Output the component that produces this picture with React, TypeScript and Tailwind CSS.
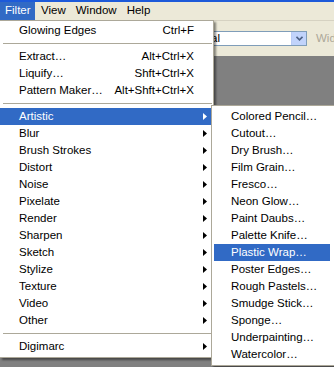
const topItems = [
  { label: "Extract…", keys: "Alt+Ctrl+X" },
  { label: "Liquify…", keys: "Shft+Ctrl+X" },
  { label: "Pattern Maker…", keys: "Alt+Shft+Ctrl+X" },
];

const groups = [
  "Artistic",
  "Blur",
  "Brush Strokes",
  "Distort",
  "Noise",
  "Pixelate",
  "Render",
  "Sharpen",
  "Sketch",
  "Stylize",
  "Texture",
  "Video",
  "Other",
];

const artistic = [
  "Colored Pencil…",
  "Cutout…",
  "Dry Brush…",
  "Film Grain…",
  "Fresco…",
  "Neon Glow…",
  "Paint Daubs…",
  "Palette Knife…",
  "Plastic Wrap…",
  "Poster Edges…",
  "Rough Pastels…",
  "Smudge Stick…",
  "Sponge…",
  "Underpainting…",
  "Watercolor…",
];

const Arrow = ({ white }: { white?: boolean }) => (
  <svg width="4" height="7" viewBox="0 0 4 7" className="shrink-0">
    <polygon points="0,0 4,3.5 0,7" fill={white ? "#ffffff" : "#000000"} />
  </svg>
);

const Separator = () => (
  <div className="h-[9px] flex items-center pl-[3px] pr-[1px]">
    <div className="h-px w-full bg-[#aca899]" />
  </div>
);

const App = () => {
  return (
    <div
      className="relative w-[334px] h-[367px] overflow-hidden bg-[#808080] text-[11.5px] text-black"
      style={{ fontFamily: '"Liberation Sans", Arial, sans-serif' }}
    >
      <div className="h-[2px] bg-[#1d5ad9]" />

      {/* menu bar */}
      <div className="h-[18px] flex items-center bg-[#ece9d8]">
        <div className="h-full w-[35px] pl-[5px] flex items-center bg-[#316ac5] text-white">
          Filter
        </div>
        <div className="flex items-center gap-[10px] ml-[6px]">
          <span>View</span>
          <span>Window</span>
          <span>Help</span>
        </div>
      </div>

      {/* options bar */}
      <div className="h-[36px] bg-[#ece9d8] border-t border-[#d6d2c2] flex items-center pl-[180px]">
        <div className="shrink-0 w-[127px] h-[15px] bg-white border border-[#7f9db9] flex items-center">
          <span className="flex-1 pl-[2px] leading-[13px]">Normal</span>
          <div className="w-[15px] h-[13px] bg-[#c1d3fb] border-l border-[#b9cbf5] flex items-center justify-center">
            <svg width="7" height="5" viewBox="0 0 7 5">
              <polyline points="0.5,0.8 3.5,3.8 6.5,0.8" fill="none" stroke="#4d6185" strokeWidth="1.6" />
            </svg>
          </div>
        </div>
        <span className="shrink-0 whitespace-nowrap ml-[9px] text-[#aca899]">Width:</span>
      </div>

      {/* Filter menu */}
      <div className="absolute left-0 top-[20px] w-[214px] bg-white border border-l-0 border-[#aca899] pt-[1px] pb-[2px] shadow-[2px_2px_2px_rgba(0,0,0,0.45)] z-10">
        <div className="h-[17px] flex items-center pl-[19px] pr-[19px]">
          <span className="flex-1">Glowing Edges</span>
          <span>Ctrl+F</span>
        </div>
        <Separator />
        {topItems.map((item) => (
          <div key={item.label} className="h-[17px] flex items-center pl-[19px] pr-[19px]">
            <span className="flex-1 whitespace-nowrap">{item.label}</span>
            <span className="whitespace-nowrap">{item.keys}</span>
          </div>
        ))}
        <Separator />
        {groups.map((g, i) => (
          <div
            key={g}
            className={`h-[17px] flex items-center pl-[19px] pr-[6px] ${
              i === 0 ? "bg-[#316ac5] text-white" : ""
            }`}
          >
            <span className="flex-1">{g}</span>
            <Arrow white={i === 0} />
          </div>
        ))}
        <Separator />
        <div className="h-[17px] flex items-center pl-[19px] pr-[6px]">
          <span className="flex-1">Digimarc</span>
          <Arrow />
        </div>
      </div>

      {/* Artistic submenu */}
      <div className="absolute left-[211px] top-[105px] w-[123px] bg-white border border-r-0 border-[#aca899] pl-[2px] pr-[4px] py-[2px] shadow-[2px_2px_2px_rgba(0,0,0,0.45)] z-20">
        {artistic.map((a) => (
          <div
            key={a}
            className={`h-[17px] flex items-center pl-[17px] whitespace-nowrap ${
              a === "Plastic Wrap…" ? "bg-[#316ac5] text-white" : ""
            }`}
          >
            {a}
          </div>
        ))}
      </div>
    </div>
  );
};

export default App;
